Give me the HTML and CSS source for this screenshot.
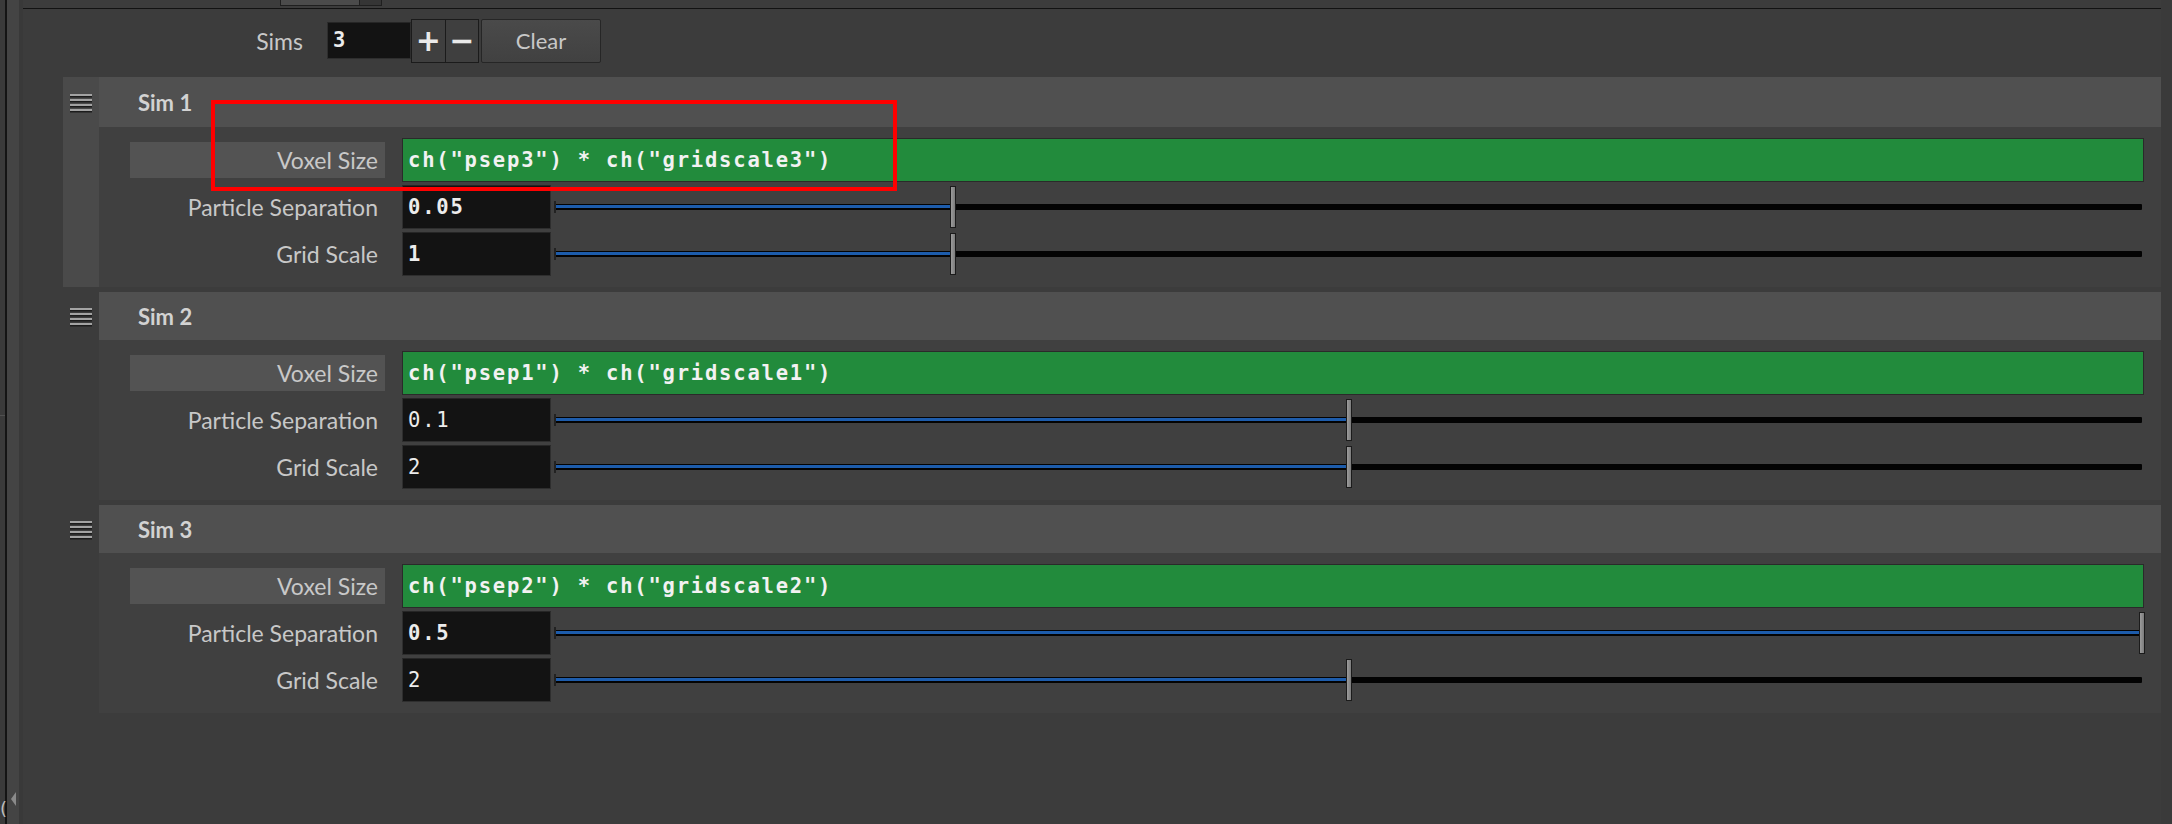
FILE: index.html
```html
<!DOCTYPE html>
<html>
<head>
<meta charset="utf-8">
<link rel="stylesheet" href="styles.css">
</head>
<body>
<div class="app">
  <div class="leftbar">
    <div class="lb-a"><div class="lb-tick"></div><div class="lb-paren">(</div></div>
    <div class="lb-line"></div>
    <div class="lb-b"><div class="lb-tri"></div></div>
    <div class="lb-c"></div>
  </div>
  <div class="main">
    <div class="topstrip"><div class="topbtn"><div class="topbtn-end"></div></div></div>
    <div class="simsrow">
      <span class="simslabel">Sims</span>
      <div class="field mono bold small">3</div>
      <div class="pm"><div class="pmbtn">+</div><div class="pmbtn minus">&minus;</div></div>
      <div class="clear">Clear</div>
    </div>
    <div class="sections">
      <div class="section active">
        <div class="handle"><svg width="22" height="19" viewBox="0 0 22 19"><g><rect x="0" y="0" width="22" height="2" fill="#a3a3a3"/><rect x="0" y="2" width="22" height="1.5" fill="#1c1c1c"/><rect x="0" y="5" width="22" height="2" fill="#a3a3a3"/><rect x="0" y="7" width="22" height="1.5" fill="#1c1c1c"/><rect x="0" y="10" width="22" height="2" fill="#a3a3a3"/><rect x="0" y="12" width="22" height="1.5" fill="#1c1c1c"/><rect x="0" y="15" width="22" height="2" fill="#a3a3a3"/><rect x="0" y="17" width="22" height="1.5" fill="#1c1c1c"/></g></svg></div>
        <div class="body">
          <div class="header">Sim 1</div>
          <div class="content">
            <div class="row"><div class="label hl">Voxel Size</div><div class="expr mono bold">ch("psep3") * ch("gridscale3")</div></div>
            <div class="row"><div class="label">Particle Separation</div><div class="field mono bold">0.05</div><div class="slider"><div class="track"><div class="fill" style="width:25.1%"></div><div class="thumb" style="left:25.1%"></div></div></div></div>
            <div class="row"><div class="label">Grid Scale</div><div class="field mono bold">1</div><div class="slider"><div class="track"><div class="fill" style="width:25.1%"></div><div class="thumb" style="left:25.1%"></div></div></div></div>
          </div>
        </div>
      </div>
      <div class="section">
        <div class="handle"><svg width="22" height="19" viewBox="0 0 22 19"><g><rect x="0" y="0" width="22" height="2" fill="#a3a3a3"/><rect x="0" y="2" width="22" height="1.5" fill="#1c1c1c"/><rect x="0" y="5" width="22" height="2" fill="#a3a3a3"/><rect x="0" y="7" width="22" height="1.5" fill="#1c1c1c"/><rect x="0" y="10" width="22" height="2" fill="#a3a3a3"/><rect x="0" y="12" width="22" height="1.5" fill="#1c1c1c"/><rect x="0" y="15" width="22" height="2" fill="#a3a3a3"/><rect x="0" y="17" width="22" height="1.5" fill="#1c1c1c"/></g></svg></div>
        <div class="body">
          <div class="header">Sim 2</div>
          <div class="content">
            <div class="row"><div class="label hl">Voxel Size</div><div class="expr mono bold">ch("psep1") * ch("gridscale1")</div></div>
            <div class="row"><div class="label">Particle Separation</div><div class="field mono">0.1</div><div class="slider"><div class="track"><div class="fill" style="width:50%"></div><div class="thumb" style="left:50%"></div></div></div></div>
            <div class="row"><div class="label">Grid Scale</div><div class="field mono">2</div><div class="slider"><div class="track"><div class="fill" style="width:50%"></div><div class="thumb" style="left:50%"></div></div></div></div>
          </div>
        </div>
      </div>
      <div class="section">
        <div class="handle"><svg width="22" height="19" viewBox="0 0 22 19"><g><rect x="0" y="0" width="22" height="2" fill="#a3a3a3"/><rect x="0" y="2" width="22" height="1.5" fill="#1c1c1c"/><rect x="0" y="5" width="22" height="2" fill="#a3a3a3"/><rect x="0" y="7" width="22" height="1.5" fill="#1c1c1c"/><rect x="0" y="10" width="22" height="2" fill="#a3a3a3"/><rect x="0" y="12" width="22" height="1.5" fill="#1c1c1c"/><rect x="0" y="15" width="22" height="2" fill="#a3a3a3"/><rect x="0" y="17" width="22" height="1.5" fill="#1c1c1c"/></g></svg></div>
        <div class="body">
          <div class="header">Sim 3</div>
          <div class="content">
            <div class="row"><div class="label hl">Voxel Size</div><div class="expr mono bold">ch("psep2") * ch("gridscale2")</div></div>
            <div class="row"><div class="label">Particle Separation</div><div class="field mono bold">0.5</div><div class="slider"><div class="track"><div class="fill" style="width:100%"></div><div class="thumb" style="left:100%"></div></div></div></div>
            <div class="row"><div class="label">Grid Scale</div><div class="field mono">2</div><div class="slider"><div class="track"><div class="fill" style="width:50%"></div><div class="thumb" style="left:50%"></div></div></div></div>
          </div>
        </div>
      </div>
    </div>
  </div>
  <div class="rightbar"></div>
</div>
<div class="redbox"></div>
</body>
</html>
```
FILE: styles.css
```css
* { box-sizing: border-box; margin: 0; padding: 0; }
html, body { width: 2172px; height: 824px; overflow: hidden; background: #3c3c3c; }
body { font-family: Lato, "Open Sans", sans-serif; color: #c8c8c8; position: relative; }

.app { display: flex; height: 824px; }

.leftbar { width: 23px; flex: none; display: flex; }
.lb-a { width: 5px; background: #3a3a3a; display: flex; flex-direction: column; position: relative; z-index: 1; }
.lb-tick { margin-top: 415px; height: 1px; background: #505050; }
.lb-paren { margin-top: auto; margin-bottom: 4px; margin-left: 0; font: 18px "DejaVu Sans", sans-serif; color: #bdbdbd; line-height: 22px; width: 5px; }
.lb-line { width: 2px; background: #141414; }
.lb-b { width: 12px; background: #444444; display: flex; flex-direction: column; justify-content: flex-end; padding-bottom: 18px; padding-left: 4px; }
.lb-tri { width: 0; height: 0; border-top: 7px solid transparent; border-bottom: 7px solid transparent; border-right: 5px solid #8a8a8a; }
.lb-c { width: 4px; background: #393939; }

.rightbar { width: 11px; flex: none; background: #3a3a3a; }

.main { flex: 1; display: flex; flex-direction: column; }

.topstrip { height: 9px; border-bottom: 1px solid #121212; padding-left: 257px; flex: none; }
.topbtn { width: 102px; height: 6px; background: #4b4b4b; border: 1px solid #1f1f1f; border-top: none; display: flex; justify-content: flex-end; }
.topbtn-end { width: 22px; background: #353535; border-left: 1px solid #1f1f1f; }

.simsrow { display: flex; align-items: center; height: 45px; margin-top: 9px; flex: none; }
.simslabel { width: 280px; text-align: right; font-size: 23px; }
.field { background: #131313; border: 1px solid #2e2e2e; border-top-color: #262626; color: #ececec; height: 44px; width: 149px; line-height: 42px; padding-left: 5px; }
.field.small { width: 84px; height: 37px; line-height: 35px; margin-left: 24px; }
.pm { display: flex; width: 68px; height: 44px; border: 1px solid #1b1b1b; background: #3f3f3f; }
.pmbtn { flex: 1; display: flex; align-items: center; justify-content: center; color: #eaeaea; font: bold 30px "DejaVu Sans", sans-serif; line-height: 1; }
.pmbtn.minus { border-left: 1px solid #1b1b1b; }
.clear { margin-left: 2px; width: 120px; height: 44px; display: flex; align-items: center; justify-content: center; font-size: 22px; color: #c8c8c8; background: linear-gradient(#4a4a4a, #414141); border: 1px solid #262626; border-radius: 2px; }

.sections { display: flex; flex-direction: column; gap: 5px; margin: 14px 0 0 40px; }
.section { display: flex; height: 208px; }
.section.active { height: 210px; }
.handle { width: 36px; flex: none; padding: 16px 0 0 7px; }
.section.active .handle { background: #4a4a4a; padding-top: 17px; }
.handle svg { display: block; }
.body { flex: 1; display: flex; flex-direction: column; }
.header { height: 48px; background: #505050; padding-left: 39px; line-height: 50px; font-weight: bold; font-size: 22px; color: #d2d2d2; flex: none; }
.section.active .header { height: 50px; line-height: 52px; }
.content { flex: 1; background: #404040; padding-top: 11px; display: flex; flex-direction: column; gap: 3px; }

.row { display: flex; align-items: center; height: 44px; }
.label { margin-left: 31px; width: 255px; height: 36px; line-height: 36px; text-align: right; padding-right: 7px; font-size: 23px; flex: none; }
.label.hl { background: #535353; }
.row .field { margin-left: 17px; flex: none; }
.expr { margin-left: 17px; margin-right: 17px; flex: 1; height: 44px; background: #228b3c; border: 1px solid #2a2a2a; color: #f2f2f2; line-height: 42px; padding-left: 5px; }

.mono { font-family: "DejaVu Sans Mono", monospace; font-size: 20.5px; letter-spacing: 1.8px; }
.bold { font-weight: bold; }

.slider { flex: 1; margin: 0 19px 0 4px; height: 44px; display: flex; align-items: center; }
.track { flex: 1; height: 6px; background: #030303; border-radius: 1px; position: relative; }
.track::before { content: ""; position: absolute; left: -1px; top: -3px; width: 2px; height: 12px; background: #222; }
.fill { position: absolute; left: 1px; top: 1px; height: 3px; background: #1d5cab; }
.thumb { position: absolute; top: -18px; width: 6px; height: 42px; margin-left: -3px; background: linear-gradient(90deg, #9c9c9c, #7c7c7c); border: 1px solid #1b1b1b; }

.redbox { position: absolute; left: 211px; top: 100px; width: 686px; height: 91px; border: 4px solid #ff0000; }
```
